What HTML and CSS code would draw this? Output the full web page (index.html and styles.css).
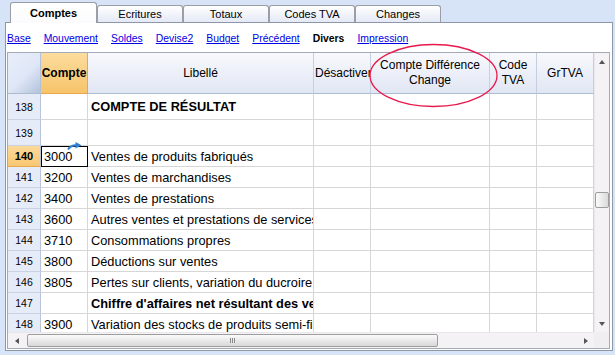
FILE: index.html
```html
<!DOCTYPE html>
<html>
<head>
<meta charset="utf-8">
<link rel="stylesheet" href="styles.css">
</head>
<body>
<div class="tabs">
  <div class="tab active">Comptes</div>
  <div class="tab">Ecritures</div>
  <div class="tab">Totaux</div>
  <div class="tab">Codes TVA</div>
  <div class="tab">Changes</div>
</div>
<div class="panel">
  <div class="links">
    <a href="#">Base</a>
    <a href="#">Mouvement</a>
    <a href="#">Soldes</a>
    <a href="#">Devise2</a>
    <a href="#">Budget</a>
    <a href="#">Précédent</a>
    <span class="cur">Divers</span>
    <a href="#">Impression</a>
  </div>
  <div class="grid">
    <div class="main">
      <div class="view">
        <div class="row head">
          <div class="cell c0 corner-h"></div>
          <div class="cell c1 hot">Compte</div>
          <div class="cell c2">Libellé</div>
          <div class="cell c3 left">Désactiver</div>
          <div class="cell c4">Compte Différence<br>Change</div>
          <div class="cell c5">Code<br>TVA</div>
          <div class="cell c6">GrTVA</div>
        </div>
        <div class="row tall">
          <div class="cell c0 num">138</div>
          <div class="cell c1"></div>
          <div class="cell c2 b">COMPTE DE RÉSULTAT</div>
          <div class="cell c3"></div><div class="cell c4"></div><div class="cell c5"></div><div class="cell c6"></div>
        </div>
        <div class="row tall">
          <div class="cell c0 num">139</div>
          <div class="cell c1"></div>
          <div class="cell c2"></div>
          <div class="cell c3"></div><div class="cell c4"></div><div class="cell c5"></div><div class="cell c6"></div>
        </div>
        <div class="row">
          <div class="cell c0 num curnum">140</div>
          <div class="cell c1 sel">3000<svg class="jump" width="15" height="8" viewBox="0 0 15 8"><path d="M1 7.5 Q3.5 3.2 9 3.2" fill="none" stroke="#2f7fd0" stroke-width="2"/><polygon points="8.5,0 14.5,3.3 8.5,6.5" fill="#2f7fd0"/></svg></div>
          <div class="cell c2">Ventes de produits fabriqués</div>
          <div class="cell c3"></div><div class="cell c4"></div><div class="cell c5"></div><div class="cell c6"></div>
        </div>
        <div class="row">
          <div class="cell c0 num">141</div>
          <div class="cell c1">3200</div>
          <div class="cell c2">Ventes de marchandises</div>
          <div class="cell c3"></div><div class="cell c4"></div><div class="cell c5"></div><div class="cell c6"></div>
        </div>
        <div class="row">
          <div class="cell c0 num">142</div>
          <div class="cell c1">3400</div>
          <div class="cell c2">Ventes de prestations</div>
          <div class="cell c3"></div><div class="cell c4"></div><div class="cell c5"></div><div class="cell c6"></div>
        </div>
        <div class="row">
          <div class="cell c0 num">143</div>
          <div class="cell c1">3600</div>
          <div class="cell c2">Autres ventes et prestations de services</div>
          <div class="cell c3"></div><div class="cell c4"></div><div class="cell c5"></div><div class="cell c6"></div>
        </div>
        <div class="row">
          <div class="cell c0 num">144</div>
          <div class="cell c1">3710</div>
          <div class="cell c2">Consommations propres</div>
          <div class="cell c3"></div><div class="cell c4"></div><div class="cell c5"></div><div class="cell c6"></div>
        </div>
        <div class="row">
          <div class="cell c0 num">145</div>
          <div class="cell c1">3800</div>
          <div class="cell c2">Déductions sur ventes</div>
          <div class="cell c3"></div><div class="cell c4"></div><div class="cell c5"></div><div class="cell c6"></div>
        </div>
        <div class="row">
          <div class="cell c0 num">146</div>
          <div class="cell c1">3805</div>
          <div class="cell c2">Pertes sur clients, variation du ducroire</div>
          <div class="cell c3"></div><div class="cell c4"></div><div class="cell c5"></div><div class="cell c6"></div>
        </div>
        <div class="row">
          <div class="cell c0 num">147</div>
          <div class="cell c1"></div>
          <div class="cell c2 b">Chiffre d'affaires net résultant des ventes</div>
          <div class="cell c3"></div><div class="cell c4"></div><div class="cell c5"></div><div class="cell c6"></div>
        </div>
        <div class="row">
          <div class="cell c0 num">148</div>
          <div class="cell c1">3900</div>
          <div class="cell c2">Variation des stocks de produits semi-finis</div>
          <div class="cell c3"></div><div class="cell c4"></div><div class="cell c5"></div><div class="cell c6"></div>
        </div>
      </div>
      <div class="vscroll">
        <div class="vbtn"><span class="ar-up"></span></div>
        <div class="track"><div class="vthumb"></div></div>
        <div class="vbtn"><span class="ar-down"></span></div>
      </div>
    </div>
    <div class="hrow">
      <div class="hscroll">
        <div class="hbtn"><span class="ar-left"></span></div>
        <div class="hthumb"><span class="grip"></span><span class="grip"></span><span class="grip"></span></div>
        <div class="hspace"></div>
        <div class="hbtn"><span class="ar-right"></span></div>
      </div>
      <div class="corner"></div>
    </div>
  </div>
  <svg class="ring" width="134" height="67" viewBox="0 0 134 67"><ellipse cx="65.5" cy="32.5" rx="63.5" ry="31" fill="none" stroke="#e8184c" stroke-width="1.3"/></svg>
</div>
</body>
</html>
```
FILE: styles.css
```css
* { box-sizing: border-box; }
body {
  margin: 0;
  width: 615px;
  height: 355px;
  overflow: hidden;
  background: #d7e3f7;
  font-family: "Liberation Sans", Arial, sans-serif;
  color: #000;
}
.tabs {
  display: flex;
  align-items: flex-end;
  height: 22px;
  padding-left: 10px;
}
.tab {
  width: 86px;
  height: 17px;
  border: 1px solid #9a9ea6;
  border-bottom: none;
  border-radius: 3px 3px 0 0;
  background: linear-gradient(#ffffff, #e5e9f6);
  font-size: 11px;
  line-height: 15px;
  padding-top: 1px;
  text-align: center;
}
.tab.active {
  width: 87px;
  height: 21px;
  margin-bottom: -1px;
  background: linear-gradient(#ffffff, #fbfbfd);
  font-weight: bold;
  line-height: 14px;
  padding-top: 3px;
  position: relative;
  z-index: 2;
}
.panel {
  position: relative;
  margin-left: 5px;
  width: 608px;
  height: 329px;
  border: 1px solid #8d97a8;
  background: #fff;
}
.links {
  display: flex;
  gap: 13px;
  height: 29px;
  padding: 9px 0 0 1px;
  font-size: 10.4px;
  line-height: 14px;
}
.links a { color: #0000e6; text-decoration: underline; }
.links .cur { font-weight: bold; }
.grid {
  margin-left: 1px;
  width: 603px;
  height: 297px;
  border: 1px solid #a3aab8;
}
.main { display: flex; height: 279px; }
.view { width: 586px; overflow: hidden; }
.row { display: flex; height: 21px; flex: none; }
.row.tall { height: 26px; }
.cell {
  flex: none;
  border-right: 1px solid #d6d6d6;
  border-bottom: 1px solid #d6d6d6;
  padding: 0 3px;
  font-size: 12.8px;
  white-space: nowrap;
  overflow: hidden;
  display: flex;
  align-items: center;
}
.c0 { width: 33px; }
.c1 { width: 47px; }
.c2 { width: 226px; }
.c3 { width: 57px; }
.c4 { width: 119px; }
.c5 { width: 47px; }
.c6 { width: 57px; }
.b { font-weight: bold; }
.row.head { height: 41px; }
.head .cell {
  justify-content: center;
  text-align: center;
  font-size: 12px;
  line-height: 15px;
  padding: 0 1px;
  background: linear-gradient(#f8f9fd, #e1e6f4);
  border-right-color: #c6cfdf;
  border-bottom-color: #aebcd3;
}
.head .cell.left { justify-content: flex-start; padding-left: 1px; }
.head .corner-h {
  background: linear-gradient(135deg, #e9eefa 0%, #dfe7f7 55%, #b2c2da 100%);
  border-right-color: #b3c1d8;
}
.head .hot {
  background: linear-gradient(#fcdc9e, #f6c46a);
  border-right-color: #eea54a;
  border-bottom-color: #eea54a;
  font-weight: bold;
}
.num {
  justify-content: center;
  padding: 0;
  font-size: 10.5px;
  background: #e5ecf8;
  border-right-color: #b8c5da;
  border-bottom-color: #c9d3e3;
}
.num.curnum {
  background: linear-gradient(#fcd99a, #f8c772);
  border-bottom-color: #e9aa52;
  font-weight: bold;
  font-size: 11px;
}
.sel {
  position: relative;
  overflow: visible;
  outline: 1px solid #000;
  outline-offset: -1px;
}
.jump { position: absolute; left: 26px; top: -4px; }
.vscroll {
  width: 15px;
  background: #f4f2f4;
  border-left: 1px solid #e9e7ea;
  display: flex;
  flex-direction: column;
}
.vbtn {
  height: 17px;
  display: flex;
  align-items: center;
  justify-content: center;
  flex: none;
}
.track { flex: 1; }
.vthumb {
  margin: 122px 0 0 0;
  height: 16px;
  border: 1px solid #9d9d9d;
  border-radius: 2px;
  background: linear-gradient(90deg, #fbfbfb, #dadada);
}
.ar-up, .ar-down, .ar-left, .ar-right { width: 0; height: 0; display: block; }
.ar-up { border-left: 3.5px solid transparent; border-right: 3.5px solid transparent; border-bottom: 4px solid #555; }
.ar-down { border-left: 3.5px solid transparent; border-right: 3.5px solid transparent; border-top: 4px solid #555; }
.ar-left { border-top: 3.5px solid transparent; border-bottom: 3.5px solid transparent; border-right: 4px solid #555; }
.ar-right { border-top: 3.5px solid transparent; border-bottom: 3.5px solid transparent; border-left: 4px solid #555; }
.hrow { display: flex; height: 16px; }
.hscroll {
  width: 586px;
  background: #f4f2f4;
  border-top: 1px solid #e9e7ea;
  display: flex;
  align-items: center;
}
.hbtn {
  width: 17px;
  height: 15px;
  display: flex;
  align-items: center;
  justify-content: center;
  flex: none;
}
.hthumb {
  width: 411px;
  height: 13px;
  margin-left: 2px;
  border: 1px solid #9d9d9d;
  border-radius: 2px;
  background: linear-gradient(#fbfbfb, #d8d8d8);
  display: flex;
  align-items: center;
  justify-content: center;
  gap: 1px;
}
.grip { width: 1px; height: 5px; background: #8a8a8a; }
.hspace { flex: 1; }
.corner { width: 15px; background: #f0eef0; }
.ring { position: absolute; left: 362px; top: 20px; z-index: 3; }
```
